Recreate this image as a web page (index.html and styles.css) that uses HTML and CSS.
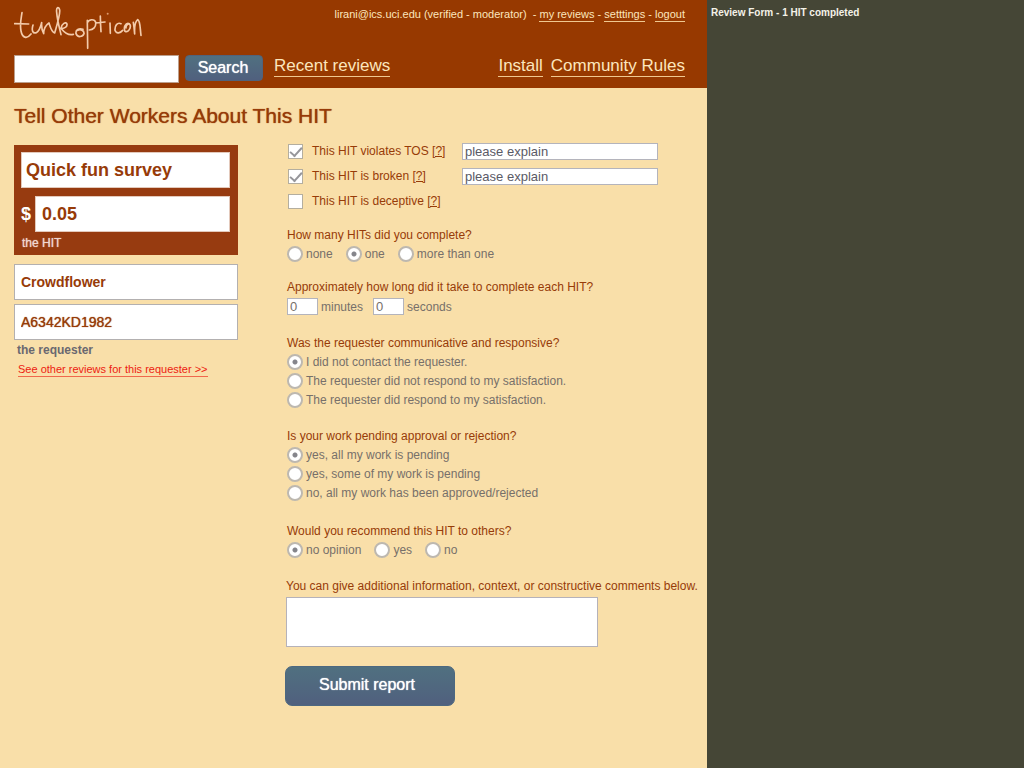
FILE: index.html
```html
<!DOCTYPE html>
<html lang="en">
<head>
<meta charset="utf-8">
<title>Turkopticon - Review Form</title>
<link rel="stylesheet" href="styles.css">
</head>
<body>
<div class="page">
  <div class="app">
    <header class="header">
      <div class="header-top">
        <svg class="logo" viewBox="12 0 402 138" role="img" aria-label="turkopticon">
          <path d="M36 23C33 42 29 58 33 78C37 98 50 104 63 87M14 56L56 57M69 60C64 76 68 87 79 83C89 78 92 65 95 53C94 68 96 78 101 86C101 72 108 60 117 54C121 66 124 80 134 84C141 60 151 28 149 15C146 3 138 6 140 22C142 46 148 67 153 89M153 70C155 56 168 49 171 57C172 66 163 70 154 71C163 82 176 92 190 88M219 73C207 69 196 74 198 86C203 99 218 96 222 86C223 76 211 71 203 76M232 46C232 74 233 102 233 130M232 53C237 42 254 41 257 52C259 66 249 75 238 75M271 33C271 48 272 66 273 80M257 54L285 51M300 54L301 85M333 56C322 51 314 62 315 76C319 88 331 84 338 76M358 56C346 52 340 68 345 79C354 84 364 69 360 59C355 52 347 62 348 69M370 52C372 64 373 76 374 87C373 66 376 49 383 44C391 46 390 70 393 91"/>
          <circle cx="293" cy="26" r="3"/>
        </svg>
        <nav class="account" aria-label="Account">lirani@ics.uci.edu (verified - moderator) &nbsp;- <a href="#">my reviews</a> - <a href="#">setttings</a> - <a href="#">logout</a></nav>
      </div>
      <div class="header-bottom">
        <form class="search">
          <input class="search-box" type="text" aria-label="Search">
          <button class="search-button" type="button">Search</button>
        </form>
        <nav class="nav" aria-label="Main">
          <a href="#">Recent reviews</a>
          <a class="nav-push" href="#">Install</a>
          <a href="#">Community Rules</a>
        </nav>
      </div>
    </header>

    <main class="main">
      <h1 class="title">Tell Other Workers About This HIT</h1>
      <form class="report">
        <div class="subject">
          <div class="hit">
            <input class="field field-hit" type="text" aria-label="HIT title" value="Quick fun survey">
            <div class="price">
              <label for="price">$</label>
              <input class="field field-hit field-price" id="price" type="text" value="0.05">
            </div>
            <p class="hit-caption">the HIT</p>
          </div>
          <input class="field" type="text" aria-label="Requester name" value="Crowdflower">
          <input class="field field-id" type="text" aria-label="Requester ID" value="A6342KD1982">
          <p class="requester-caption">the requester</p>
          <a class="other-reviews" href="#">See other reviews for this requester &gt;&gt;</a>
        </div>

        <div class="questions">
          <div class="flags">
            <div class="flag">
              <input class="check" type="checkbox" id="tos" checked>
              <span><label for="tos">This HIT violates TOS</label> <a href="#">[?]</a></span>
              <input class="small-field" type="text" aria-label="Explain TOS violation" value="please explain">
            </div>
            <div class="flag">
              <input class="check" type="checkbox" id="broken" checked>
              <span><label for="broken">This HIT is broken</label> <a href="#">[?]</a></span>
              <input class="small-field" type="text" aria-label="Explain how it is broken" value="please explain">
            </div>
            <div class="flag">
              <input class="check" type="checkbox" id="deceptive">
              <span><label for="deceptive">This HIT is deceptive</label> <a href="#">[?]</a></span>
            </div>
          </div>

          <fieldset class="group group-tight">
            <legend>How many HITs did you complete?</legend>
            <div class="row">
              <label class="option"><input type="radio" name="count">none</label>
              <label class="option"><input type="radio" name="count" checked>one</label>
              <label class="option"><input type="radio" name="count">more than one</label>
            </div>
          </fieldset>

          <fieldset class="group">
            <legend>Approximately how long did it take to complete each HIT?</legend>
            <div class="row row-time">
              <label class="option"><input class="small-field time" type="text" value="0">minutes</label>
              <label class="option"><input class="small-field time" type="text" value="0">seconds</label>
            </div>
          </fieldset>

          <fieldset class="group">
            <legend>Was the requester communicative and responsive?</legend>
            <label class="option"><input type="radio" name="contact" checked>I did not contact the requester.</label>
            <label class="option"><input type="radio" name="contact">The requester did not respond to my satisfaction.</label>
            <label class="option"><input type="radio" name="contact">The requester did respond to my satisfaction.</label>
          </fieldset>

          <fieldset class="group group-loose">
            <legend>Is your work pending approval or rejection?</legend>
            <label class="option"><input type="radio" name="pending" checked>yes, all my work is pending</label>
            <label class="option"><input type="radio" name="pending">yes, some of my work is pending</label>
            <label class="option"><input type="radio" name="pending">no, all my work has been approved/rejected</label>
          </fieldset>

          <fieldset class="group">
            <legend>Would you recommend this HIT to others?</legend>
            <div class="row">
              <label class="option"><input type="radio" name="recommend" checked>no opinion</label>
              <label class="option"><input type="radio" name="recommend">yes</label>
              <label class="option"><input type="radio" name="recommend">no</label>
            </div>
          </fieldset>

          <label class="comments-label" for="comments">You can give additional information, context, or constructive comments below.</label>
          <textarea class="comments" id="comments"></textarea>
          <button class="submit" type="button">Submit report</button>
        </div>
      </form>
    </main>
  </div>
  <aside class="notes">Review Form - 1 HIT completed</aside>
</div>
</body>
</html>
```
FILE: styles.css
```css
* { box-sizing: border-box; }

body {
  margin: 0;
  font: 12px/18px "Liberation Sans", Arial, sans-serif;
  color: #973b08;
  background: #454636;
}

input, textarea, button { font-family: inherit; margin: 0; }

.page {
  display: grid;
  grid-template-columns: minmax(0, 1fr) 317px;
  min-height: 100vh;
}

.app { background: #f9dfa9; }

.notes {
  padding: 4px;
  background: #454636;
  color: #f4f2e8;
  font-size: 10px;
  font-weight: bold;
}

/* Header */
.header {
  padding: 5px 22px 5px 14px;
  background: #973900;
  color: #fce6bd;
}

.header a {
  color: inherit;
  text-decoration: none;
  border-bottom: 1px solid #f0c890;
}

.header-top {
  display: flex;
  justify-content: space-between;
  align-items: flex-start;
  height: 50px;
}

.logo { width: 134px; height: 46px; }
.logo path { fill: none; stroke: #f3cbaa; stroke-width: 5; stroke-linecap: round; stroke-linejoin: round; }
.logo circle { fill: #dc9a6c; }

.account { font-size: 11px; line-height: 19px; }
.account a { display: inline-block; line-height: 13px; }

.header-bottom { display: flex; gap: 11px; align-items: flex-start; }

.search { display: flex; gap: 6px; align-items: flex-start; }

.search-box {
  width: 165px;
  height: 28px;
  border: 1px solid #bd9f8c;
  background: #fff;
}

.search-button {
  width: 78px;
  height: 26px;
  padding: 0 2px 1px 0;
  border: 1px solid #50627a;
  border-radius: 4px;
  background: linear-gradient(#507080, #50607e);
  color: #fff;
  font-size: 16px;
  text-shadow: 0 0 1px #fff;
}

.nav { display: flex; flex: 1; gap: 8px; font-size: 17px; line-height: 21px; }
.nav-push { margin-left: auto; }

/* Page body */
.main { padding: 16px 0 62px 14px; }

.title {
  margin: 0 0 17px;
  font-size: 21px;
  line-height: 24px;
  font-weight: normal;
  text-shadow: 0 0 1px #973b08;
}

.report { display: flex; gap: 47px; align-items: flex-start; }

.subject { display: flex; flex-direction: column; gap: 4px; width: 224px; }

.hit {
  display: flex;
  flex-direction: column;
  gap: 8px;
  margin-bottom: 5px;
  padding: 7px 8px 3px 7px;
  background: #973b10;
}

.field {
  width: 100%;
  height: 36px;
  padding: 0 6px;
  border: 1px solid #b3b0b0;
  background: #fff;
  color: #973b08;
  font-size: 14px;
  font-weight: bold;
}

.field-id { font-weight: normal; text-shadow: 0 0 1px #973b08; }
.field-hit { padding: 0 4px; border-color: #e3c9bb; font-size: 18px; }
.field-price { flex: 1; min-width: 0; padding: 0 6px; }

.price { display: flex; align-items: center; gap: 4px; color: #fff; font-size: 18px; font-weight: bold; }

.hit-caption { margin: -6px 0 0 1px; color: #efd6d0; text-shadow: 0 0 1px #efd6d0; }

.requester-caption {
  margin: -3px 3px 0;
  color: #6a6870;
  font-weight: bold;
}

.other-reviews {
  align-self: flex-start;
  margin-left: 4px;
  color: #ed1c10;
  border-bottom: 1px solid #f0684c;
  font-size: 11px;
  line-height: 13px;
  text-decoration: none;
}

.questions { flex: 1; min-width: 0; }

.flags { display: grid; gap: 7px; margin: -3px 0 16px 3px; }

.flag {
  display: grid;
  grid-template-columns: 15px 141px 196px;
  column-gap: 9px;
  align-items: center;
}

.flag a { color: inherit; }

.check {
  appearance: none;
  width: 15px;
  height: 15px;
  border: 1px solid #b4ae9f;
  background: #fff;
}

.check:checked::before {
  content: "";
  display: block;
  width: 10px;
  height: 5px;
  margin: 2px 0 0 1px;
  border: solid #96969a;
  border-width: 0 0 2px 2px;
  transform: rotate(-48deg);
}

.small-field {
  width: 100%;
  height: 17px;
  padding: 0 2px;
  border: 1px solid #b4b4bc;
  background: #fff;
  color: #5a5a66;
  font-size: 13px;
}

.group { margin: 0 0 18px 2px; padding: 0; border: 0; }
.group-tight { margin-bottom: 15px; }
.group-loose { margin-bottom: 20px; }

legend { padding: 0; }

.row { display: flex; gap: 13px; }
.row-time { gap: 10px; padding-top: 1px; }

.option { display: flex; align-items: center; gap: 3px; height: 19px; color: #77706a; }

.option input[type="radio"] {
  appearance: none;
  width: 16px;
  height: 16px;
  border: 2px solid #bdb8b0;
  border-radius: 50%;
  background: #fff;
}

.option input[type="radio"]:checked { background: radial-gradient(circle, #85858b 2px, #fff 3px); }

.option .time { width: 31px; color: #77706a; }

.comments-label { display: block; margin-left: 1px; white-space: nowrap; }

.comments {
  display: block;
  width: 312px;
  height: 50px;
  margin: 2px 0 19px 1px;
  border: 1px solid #b5b2ba;
  background: #fff;
  resize: none;
}

.submit {
  width: 170px;
  height: 40px;
  padding: 0 6px 3px 0;
  border: 1px solid #4d6880;
  border-radius: 7px;
  background: linear-gradient(#507080, #50607e);
  color: #fff;
  font-size: 16px;
  text-shadow: 0 0 1px #fff;
}
```
